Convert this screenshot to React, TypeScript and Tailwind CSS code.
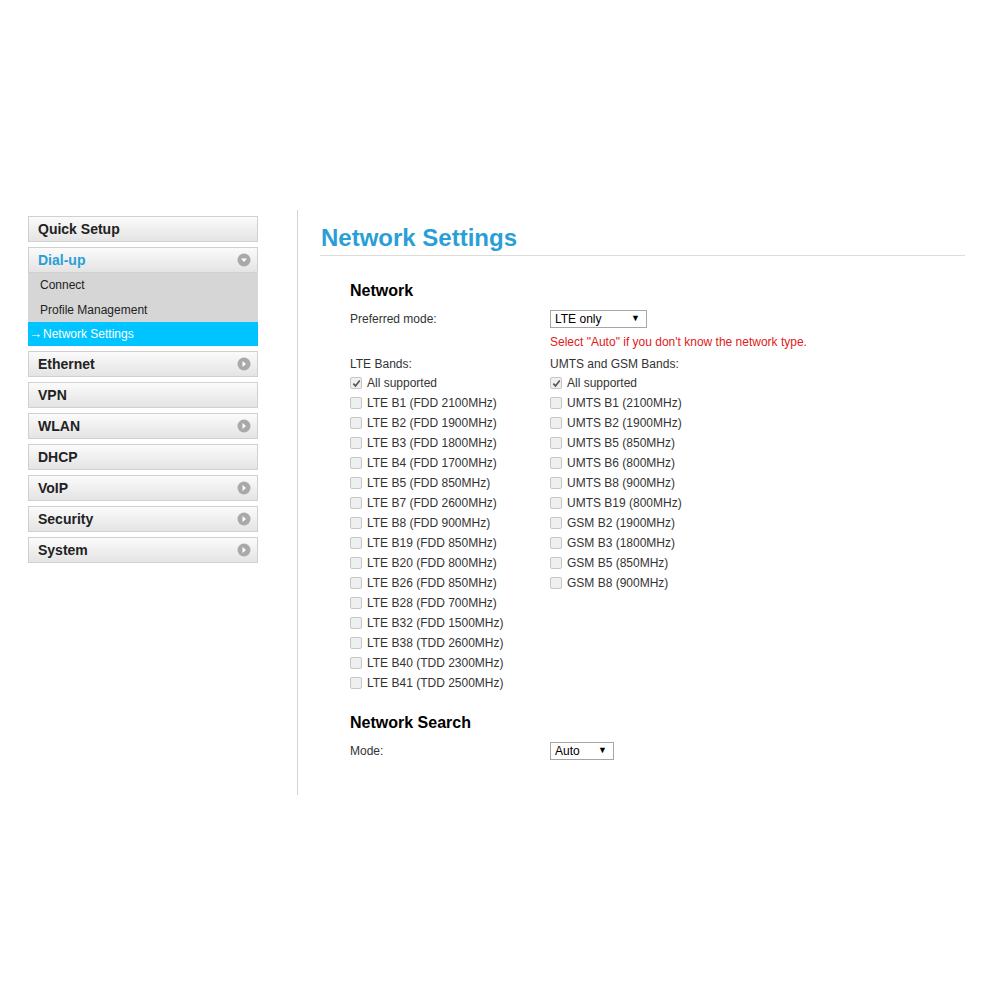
import React from "react";

const lteBands = [
  "LTE B1 (FDD 2100MHz)",
  "LTE B2 (FDD 1900MHz)",
  "LTE B3 (FDD 1800MHz)",
  "LTE B4 (FDD 1700MHz)",
  "LTE B5 (FDD 850MHz)",
  "LTE B7 (FDD 2600MHz)",
  "LTE B8 (FDD 900MHz)",
  "LTE B19 (FDD 850MHz)",
  "LTE B20 (FDD 800MHz)",
  "LTE B26 (FDD 850MHz)",
  "LTE B28 (FDD 700MHz)",
  "LTE B32 (FDD 1500MHz)",
  "LTE B38 (TDD 2600MHz)",
  "LTE B40 (TDD 2300MHz)",
  "LTE B41 (TDD 2500MHz)",
];

const umtsBands = [
  "UMTS B1 (2100MHz)",
  "UMTS B2 (1900MHz)",
  "UMTS B5 (850MHz)",
  "UMTS B6 (800MHz)",
  "UMTS B8 (900MHz)",
  "UMTS B19 (800MHz)",
  "GSM B2 (1900MHz)",
  "GSM B3 (1800MHz)",
  "GSM B5 (850MHz)",
  "GSM B8 (900MHz)",
];

function Circle({ down }: { down?: boolean }) {
  return (
    <svg width={14} height={14} viewBox="0 0 14 14">
      <circle cx={7} cy={7} r={6.5} fill="#a9a9a9" />
      {down ? (
        <path d="M4 5.5h6L7 9z" fill="#fff" />
      ) : (
        <path d="M5.5 4v6L9 7z" fill="#fff" />
      )}
    </svg>
  );
}

function MenuButton({ label, arrow, active }: { label: string; arrow?: "down" | "right"; active?: boolean }) {
  return (
    <div className="flex h-[26px] items-center justify-between border border-[#d0d0d0] bg-gradient-to-b from-[#fbfbfb] to-[#e4e4e4] pl-[9px] pr-[6px]">
      <span className={`text-[14px] font-bold ${active ? "text-[#2a9fd6]" : "text-[#222]"}`}>{label}</span>
      {arrow && <Circle down={arrow === "down"} />}
    </div>
  );
}

function Check({ checked, label }: { checked?: boolean; label: string }) {
  return (
    <div className="flex h-5 items-center">
      <span className="mr-[5px] flex h-[12px] w-[12px] items-center justify-center rounded-[2px] border border-[#c6c6c6] bg-[#efefef]">
        {checked && (
          <svg width={9} height={9} viewBox="0 0 10 10">
            <path d="M1.5 5.2l2.4 2.5L8.6 1.8" fill="none" stroke="#555" strokeWidth={1.8} />
          </svg>
        )}
      </span>
      <span>{label}</span>
    </div>
  );
}

function Select({ value, width }: { value: string; width: string }) {
  return (
    <div className={`flex h-[18px] items-center justify-between border border-[#a6a6a6] bg-white pl-[4px] pr-[6px] text-[12px] text-black ${width}`}>
      <span>{value}</span>
      <span className="text-[9px]">▼</span>
    </div>
  );
}

export default function App() {
  return (
    <div className="h-[1005px] w-[1005px] bg-white text-[12px] text-[#333]" style={{ fontFamily: '"Liberation Sans", Arial, sans-serif' }}>
      <div className="flex pt-[210px]">
        <div className="ml-[28px] mt-[6px] flex w-[230px] flex-col gap-[5px]">
          <MenuButton label="Quick Setup" />
          <div>
            <MenuButton label="Dial-up" arrow="down" active />
            <div className="bg-[#d6d6d6] text-[12px] text-[#222]">
              <div className="flex h-6 items-center pl-[12px]">Connect</div>
              <div className="flex h-[25px] items-center pl-[12px]">Profile Management</div>
              <div className="flex h-6 items-center bg-[#00c4ff] pl-[1px] text-white">
                <span className="mr-[1px] text-[13px]">→</span>Network Settings
              </div>
            </div>
          </div>
          <MenuButton label="Ethernet" arrow="right" />
          <MenuButton label="VPN" />
          <MenuButton label="WLAN" arrow="right" />
          <MenuButton label="DHCP" />
          <MenuButton label="VoIP" arrow="right" />
          <MenuButton label="Security" arrow="right" />
          <MenuButton label="System" arrow="right" />
        </div>

        <div className="ml-[39px] h-[585px] w-px bg-[#d4d4d4]" />

        <div className="ml-[22px] w-[645px]">
          <div className="border-b border-[#dcdcdc] pb-[2px] pl-[1px] pt-[13px]">
            <h1 className="text-[24px] font-bold leading-[30px] text-[#2a9fd6]">Network Settings</h1>
          </div>

          <div className="pl-[30px]">
            <h2 className="mt-[25px] text-[16px] font-bold leading-5 text-black">Network</h2>
            <div className="mt-[9px] flex h-[18px] items-center">
              <span className="w-[200px]">Preferred mode:</span>
              <Select value="LTE only" width="w-[97px]" />
            </div>
            <div className="mt-[6px] flex h-[16px] items-center pl-[200px] text-[#e02020]">
              Select "Auto" if you don't know the network type.
            </div>

            <div className="mt-[4px] flex">
              <div className="w-[200px]">
                <div className="flex h-[19px] items-center">LTE Bands:</div>
                <Check checked label="All supported" />
                {lteBands.map((b) => (
                  <Check key={b} label={b} />
                ))}
              </div>
              <div>
                <div className="flex h-[19px] items-center">UMTS and GSM Bands:</div>
                <Check checked label="All supported" />
                {umtsBands.map((b) => (
                  <Check key={b} label={b} />
                ))}
              </div>
            </div>

            <h2 className="mt-[20px] text-[16px] font-bold leading-5 text-black">Network Search</h2>
            <div className="mt-[9px] flex h-[18px] items-center">
              <span className="w-[200px]">Mode:</span>
              <Select value="Auto" width="w-[64px]" />
            </div>
          </div>
        </div>
      </div>
    </div>
  );
}
